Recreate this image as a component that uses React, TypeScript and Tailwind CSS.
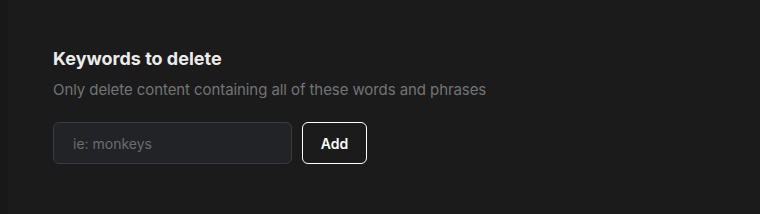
import React, { useState } from 'react';

export default function App() {
  const [value, setValue] = useState('');

  return (
    <div className="flex h-[214px] w-full bg-[#191919]" style={{ fontFamily: 'Inter, "Noto Sans", sans-serif' }}>
      <div className="w-[8px] shrink-0 bg-[#181818]" />
      {/* Keywords panel */}
      <div className="flex-1 bg-[#1b1b1b] pl-[45px] pt-[45px]">
        <h2 className="text-[18px] leading-7 font-bold text-[#ececec]">Keywords to delete</h2>
        <p className="mt-[6px] text-[15px] leading-[22px] tracking-[-0.08px] text-[#737476]">
          Only delete content containing all of these words and phrases
        </p>
        <div className="mt-[21px] flex items-center gap-[10px]">
          <input
            type="text"
            value={value}
            onChange={(e) => setValue(e.target.value)}
            placeholder="ie: monkeys"
            className="h-[42px] w-[239px] rounded-[6px] border border-[#3a3b3f] bg-[#222326] px-[19px] text-[14px] text-[#dddddd] placeholder:text-[#6b6c70] outline-none"
          />
          <button className="h-[42px] w-[65px] rounded-[6px] border border-white bg-[#1b1b1b] text-[14px] font-semibold text-white">
            Add
          </button>
        </div>
      </div>
    </div>
  );
}
